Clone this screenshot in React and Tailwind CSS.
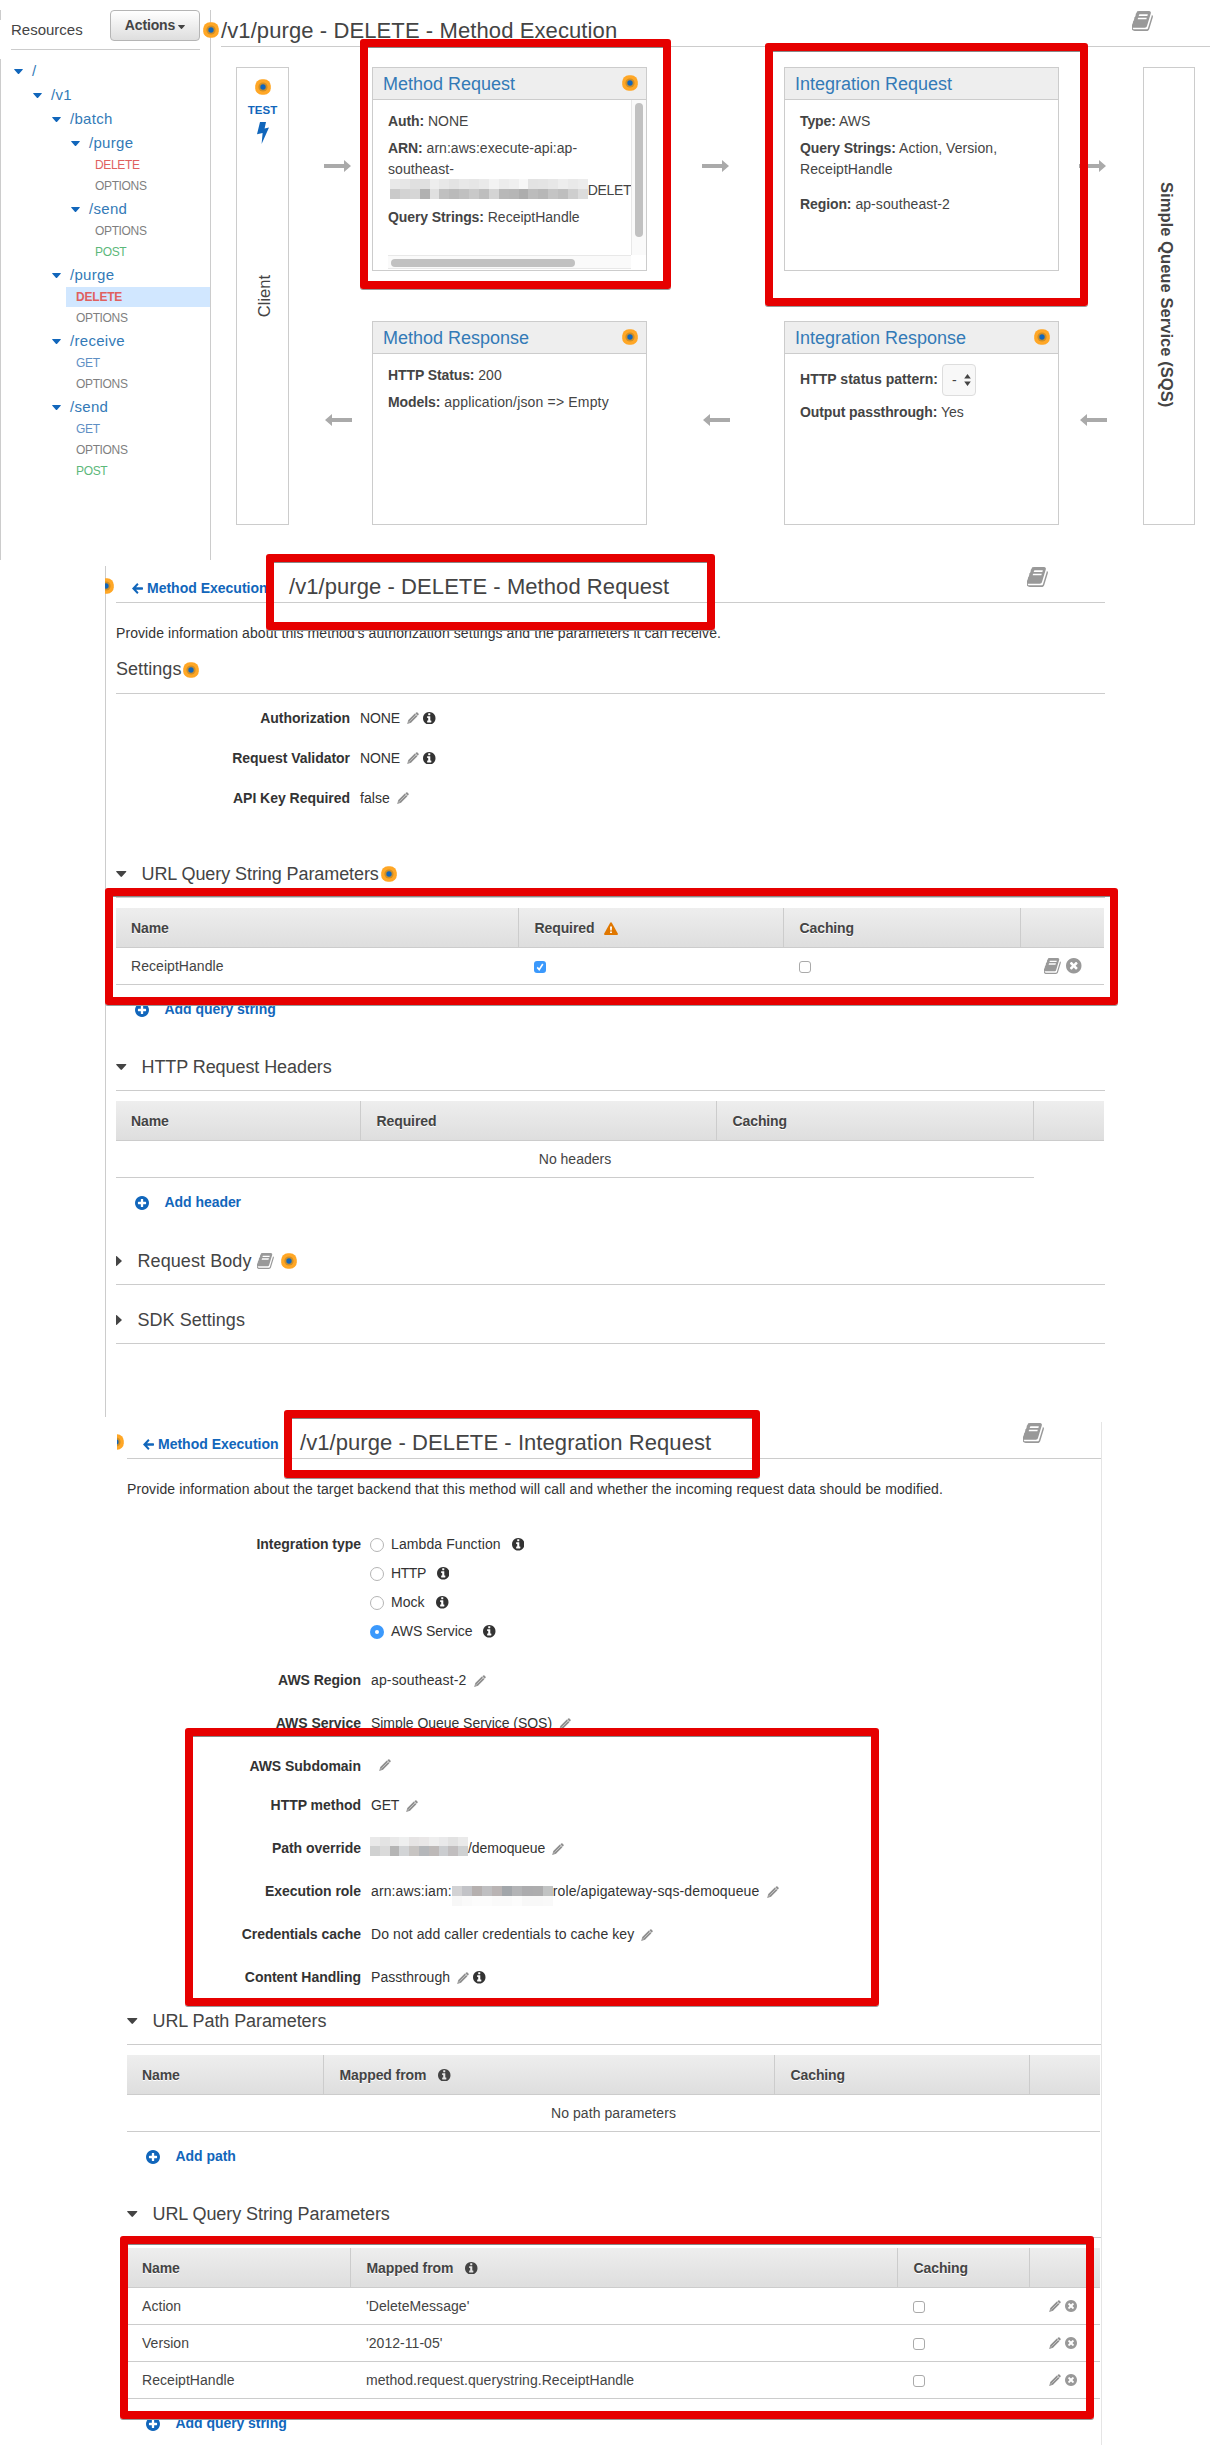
import React from "react";

const CIRCLE =
  "M1664 896q0 209-103 385.5t-279.5 279.5-385.5 103-385.5-103-279.5-279.5-103-385.5 103-385.5 279.5-279.5 385.5-103 385.5 103 279.5 279.5 103 385.5z";

const Glyph = ({ d, className }) => (
  <svg viewBox="128 128 1536 1536" className={`shrink-0 fill-current ${className}`} fillRule="evenodd">
    <path d={d} />
  </svg>
);

const Info = ({ className = "" }) => (
  <Glyph
    className={`size-[12.5px] ${className}`}
    d={
      "M1152 1376v-160q0-14-9-23t-23-9h-96v-512q0-14-9-23t-23-9h-320q-14 0-23 9t-9 23v160q0 14 9 23t23 9h96v320h-96q-14 0-23 9t-9 23v160q0 14 9 23t23 9h448q14 0 23-9t9-23zM1024 480v-160q0-14-9-23t-23-9h-192q-14 0-23 9t-9 23v160q0 14 9 23t23 9h192q14 0 23-9t9-23z" +
      CIRCLE
    }
  />
);

const Plus = () => (
  <Glyph
    className="size-[14px] text-[#1166bb]"
    d={
      "M1344 960v-128q0-26-19-45t-45-19h-256v-256q0-26-19-45t-45-19h-128q-26 0-45 19t-19 45v256h-256q-26 0-45 19t-19 45v128q0 26 19 45t45 19h256v256q0 26 19 45t45 19h128q26 0 45-19t19-45v-256h256q26 0 45-19t19-45z" +
      CIRCLE
    }
  />
);

const Times = ({ className }) => (
  <Glyph
    className={`text-[#999] ${className}`}
    d={
      "M1277 1122q0-26-19-45l-181-181 181-181q19-19 19-45 0-27-19-46l-90-90q-19-19-46-19-26 0-45 19l-181 181-181-181q-19-19-45-19-27 0-46 19l-90 90q-19 19-19 46 0 26 19 45l181 181-181 181q-19 19-19 45 0 27 19 46l90 90q19 19 46 19 26 0 45-19l181-181 181 181q19 19 45 19 27 0 46-19l90-90q19-19 19-46z" +
      CIRCLE
    }
  />
);

const Book = ({ className }) => (
  <svg viewBox="50 128 1620 1536" className={`shrink-0 fill-[#999] ${className}`}>
    <path d="M1639 478q40 57 18 129l-275 906q-19 64-76.5 107.5t-122.5 43.5h-923q-77 0-148.5-53.5t-99.5-131.5q-24-67-2-127 0-4 3-27t4-37q1-8-3-21.5t-3-19.5q2-11 8-21t16.5-23.5 16.5-23.5q23-38 45-91.5t30-91.5q3-10 .5-30t-.5-28q3-11 17-28t17-23q21-36 42-92t25-90q1-9-2.5-32t.5-28q4-13 22-30.5t22-22.5q19-26 42.5-84.5t27.5-96.5q1-8-3-25.5t-2-26.5q2-8 9-18t18-23 17-21q8-12 16.5-30.5t15-35 16-36 19.5-32 26.5-23.5 36-11.5 47.5 5.5l-1 3q38-9 51-9h761q74 0 114 56t18 130l-274 906q-36 119-71.5 153.5t-128.5 34.5h-869q-27 0-38 15-11 16-1 43 24 70 144 70h923q29 0 56-15.5t35-41.5l300-987q7-22 5-57 38 15 59 43zm-1064 2q-4 13 2 22.5t20 9.5h608q13 0 25.5-9.5t16.5-22.5l21-64q4-13-2-22.5t-20-9.5h-608q-13 0-25.5 9.5t-16.5 22.5zm-83 256q-4 13 2 22.5t20 9.5h608q13 0 25.5-9.5t16.5-22.5l21-64q4-13-2-22.5t-20-9.5h-608q-13 0-25.5 9.5t-16.5 22.5z" />
  </svg>
);

const Pencil = ({ className = "" }) => (
  <svg viewBox="0 0 12 12" className={`size-3 shrink-0 ${className}`}>
    <path d="M8.9 0.7 Q9.7 -0.1 10.5 0.6 L11.4 1.5 Q12.1 2.3 11.3 3.1 L10.7 3.7 L8.3 1.3 Z" fill="#8f8f8f" />
    <path d="M7.8 1.6 L10.4 4.2 L4 10.7 L0.2 11.9 L1.3 8.1 Z" fill="#8f8f8f" />
    <path d="M3.2 8.8 L9 3" stroke="#ddd" strokeWidth="0.7" />
    <path d="M1.9 9.2 L2.8 10.1 L1.6 10.5 Z" fill="#fff" />
  </svg>
);

const Warning = () => (
  <svg viewBox="0 0 14 13" className="h-[13px] w-[14px] shrink-0">
    <path d="M7 0.3 Q7.5 0.3 7.8 0.8 L13.8 11.6 Q14.2 13 13 13 H1 Q-0.2 13 0.2 11.6 L6.2 0.8 Q6.5 0.3 7 0.3 Z" fill="#e07700" />
    <path d="M6 4.5 H8 L7.7 8.4 H6.3 Z M6.1 9.4 H7.9 V11.1 H6.1 Z" fill="#fff" />
  </svg>
);

const Dot = ({ className = "" }) => (
  <svg viewBox="0 0 16 16" className={`size-4 shrink-0 ${className}`}>
    <rect x="0.2" y="0.2" width="15.6" height="15.6" rx="6.6" fill="#ffa726" />
    <circle cx="8" cy="8" r="4.6" fill="#cf8e26" />
    <circle cx="8" cy="8" r="2.7" fill="#1166bb" />
  </svg>
);

const CaretDown = ({ className }) => (
  <svg viewBox="0 0 10 6" preserveAspectRatio="none" className={`shrink-0 fill-current ${className}`}>
    <path d="M0.6 0 H9.4 Q10.2 0.3 9.6 1 L5.7 5.6 Q5 6.3 4.3 5.6 L0.4 1 Q-0.2 0.3 0.6 0 Z" />
  </svg>
);

const CaretRight = () => (
  <svg viewBox="0 0 6 10" className="h-[10px] w-[6px] shrink-0 fill-[#444]">
    <path d="M0 0.2 L0.6 0 L6 5 L0.6 10 L0 9.8 Z" />
  </svg>
);

const Arrow = ({ left, className = "" }) => (
  <svg viewBox="0 0 27 12" className={`h-3 w-[27px] shrink-0 fill-[#aaa] ${left ? "rotate-180" : ""} ${className}`}>
    <path d="M0 4 H20 V0 L27 6 L20 12 V8 H0 Z" />
  </svg>
);

const BackArrow = () => (
  <svg viewBox="0 0 11 11" className="size-[11px] shrink-0 fill-[#1166bb]">
    <path d="M6.6 1.4 L5.2 0.1 L0 5.5 L5.2 10.9 L6.6 9.6 L4.1 6.7 H10.4 Q11 6.6 11 6 V5 Q11 4.4 10.4 4.3 H4.1 Z" />
  </svg>
);

const Folder = ({ pad, children }) => (
  <div className={`flex h-6 items-center gap-[9px] text-[15px] tracking-[0.3px] text-[#337ab7] ${pad}`}>
    <CaretDown className="h-[5px] w-[9px] text-[#1166bb]" />
    {children}
  </div>
);

const Verb = ({ pad, color, active, children }) => (
  <div className={`h-[21px] ${active ? "pl-[65px]" : pad}`}>
    <div
      className={`h-5 text-[12px] leading-5 ${color} ${
        active ? "bg-[#d1e7ff] pl-[10px] font-bold tracking-[-0.2px]" : "tracking-[-0.35px]"
      }`}
    >
      {children}
    </div>
  </div>
);

const TREE = [
  ["f", "pl-[13px]", "/"],
  ["f", "pl-[32px]", "/v1"],
  ["f", "pl-[51px]", "/batch"],
  ["f", "pl-[70px]", "/purge"],
  ["v", "pl-[94px]", "DELETE"],
  ["v", "pl-[94px]", "OPTIONS"],
  ["f", "pl-[70px]", "/send"],
  ["v", "pl-[94px]", "OPTIONS"],
  ["v", "pl-[94px]", "POST"],
  ["f", "pl-[51px]", "/purge"],
  ["v", "pl-[75px]", "DELETE", true],
  ["v", "pl-[75px]", "OPTIONS"],
  ["f", "pl-[51px]", "/receive"],
  ["v", "pl-[75px]", "GET"],
  ["v", "pl-[75px]", "OPTIONS"],
  ["f", "pl-[51px]", "/send"],
  ["v", "pl-[75px]", "GET"],
  ["v", "pl-[75px]", "OPTIONS"],
  ["v", "pl-[75px]", "POST"],
];

const VERB_COLORS = {
  DELETE: "text-[#e0605e]",
  OPTIONS: "text-[#7f7f7f]",
  POST: "text-[#5cb87a]",
  GET: "text-[#5f8fc4]",
};

const Card = ({ title, dot, children }) => (
  <div className="h-[204px] border border-[#ccc]">
    <div className="flex h-8 items-center justify-between border-b border-[#ccc] bg-[#eee] pr-2 pl-[10px] text-[18px] text-[#337ab7]">
      <span className="pt-px">{title}</span>
      {dot && <Dot className="-mt-0.5" />}
    </div>
    {children}
  </div>
);

const Pair = ({ k, children, className = "" }) => (
  <p className={`leading-[21px] ${className}`}>
    <b className="tracking-[-0.1px]">{k}</b> {children}
  </p>
);

const Arrows = ({ width, pad }) => (
  <div className={`flex flex-col pt-[93px] ${width} ${pad}`}>
    <Arrow />
    <Arrow left className="mt-[242px] ml-px" />
  </div>
);

const Mosaic = ({ rows, cell }) => (
  <span className="flex shrink-0 flex-col">
    {rows.map((row, i) => (
      <span key={i} className="flex">
        {row.map((c, j) => (
          <span key={j} className={`${cell} ${c}`} />
        ))}
      </span>
    ))}
  </span>
);

const ARN_MASK = [
  [
    "bg-[#e9e9e9]", "bg-[#e6e6e6]", "bg-[#e0e0e0]", "bg-[#e0e0e0]", "bg-[#eee]", "bg-[#e8e8e8]", "bg-[#e3e3e3]",
    "bg-[#e8e8e8]", "bg-[#e6e6e6]", "bg-[#eaeaea]", "bg-[#f3f3f3]", "bg-[#ececec]", "bg-[#efefef]", "bg-[#f7f7f7]",
    "bg-[#e3e3e3]", "bg-[#e4e4e4]", "bg-[#e7e7e7]", "bg-[#ededed]", "bg-[#e9e9e9]", "bg-[#ececec]",
  ],
  [
    "bg-[#cacaca]", "bg-[#d3d3d3]", "bg-[#d6d6d6]", "bg-[#b1b1b1]", "bg-[#e0e0e0]", "bg-[#c0c0c0]", "bg-[#bababa]",
    "bg-[#c0c0c0]", "bg-[#c9c9c9]", "bg-[#bebebe]", "bg-[#d4d4d4]", "bg-[#b8b8b8]", "bg-[#b6b6b6]", "bg-[#adadad]",
    "bg-[#bcbcbc]", "bg-[#b7b7b7]", "bg-[#c4c4c4]", "bg-[#bebebe]", "bg-[#cecece]", "bg-[#dcdcdc]",
  ],
];

const PATH_MASK = [
  [
    "bg-[#e9e9e9]", "bg-[#e3e3e3]", "bg-[#e9e9e9]", "bg-[#eeefef]", "bg-[#e6e4e4]", "bg-[#e9e7e7]", "bg-[#eee]",
    "bg-[#e9e9ea]", "bg-[#e2e2e2]", "bg-[#eaeaea]",
  ],
  [
    "bg-[#d0d1d1]", "bg-[#dadada]", "bg-[#b5b5b5]", "bg-[#d2d4d6]", "bg-[#c7c4c2]", "bg-[#b5b7ba]", "bg-[#bdb9b8]",
    "bg-[#cbcdd0]", "bg-[#c1bebf]", "bg-[#cfd1d2]",
  ],
];

const ROLE_MASK = [
  [
    "bg-[#d2d2d4]", "bg-[#c2c3c7]", "bg-[#b5b0af]", "bg-[#bfbfc1]", "bg-[#b9b4b4]", "bg-[#a2a6aa]", "bg-[#b3b4b6]",
    "bg-[#acacae]", "bg-[#adadae]", "bg-[#c1c3c3]",
  ],
  [
    "bg-[#f7f7f7]", "bg-[#fafafa]", "bg-[#fcfcfc]", "bg-[#fcfcfc]", "bg-[#fafafa]", "bg-[#fafafa]", "bg-[#fcfcfc]",
    "bg-[#f8f8f8]", "bg-[#f8f8f8]", "bg-[#f9f9f9]",
  ],
];

const Callout = ({ className }) => (
  <div
    className={`pointer-events-none absolute rounded-[3px] border-8 border-[#e60000] shadow-[0_1px_0_#999,inset_0_1px_0_#888] ${className}`}
  />
);

const PanelHeader = ({ title }) => (
  <div className="flex h-[37px] border-b border-[#ccc] pl-4">
    <div className="flex w-[157px] items-center gap-1 pt-[9px] font-bold whitespace-nowrap text-[#1166bb]">
      <BackArrow />
      Method Execution
    </div>
    <h1 className="flex-1 text-[22px] leading-[41px] tracking-[0.07px] whitespace-nowrap text-[#444]">{title}</h1>
    <Book className="mt-px mr-[57px] h-[20px] w-[21px]" />
  </div>
);

const Field = ({ label, className = "h-[43px]", gap = "ml-[7px]", track = "tracking-[0.08px]", info, children }) => (
  <div className={`flex items-center text-[#333] ${className}`}>
    <b className="w-[234px] text-right tracking-[-0.03px]">{label}</b>
    <span className={`ml-[10px] flex items-center whitespace-nowrap ${track}`}>{children}</span>
    <Pencil className={gap} />
    {info && <Info className="ml-1" />}
  </div>
);

const Heading = ({ open = true, className = "", children }) => (
  <h2 className={`flex h-12 items-center border-b border-[#ccc] pt-px text-[18px] tracking-[-0.08px] text-[#444] ${className}`}>
    {open ? (
      <CaretDown className="mr-[15px] h-[6px] w-[10.5px]" />
    ) : (
      <span className="mr-[15.5px] flex">
        <CaretRight />
      </span>
    )}
    {children}
  </h2>
);

const Head = ({ cols, labels }) => (
  <div
    className={`mt-[10px] grid h-10 border-b border-[#ccc] bg-linear-to-b from-[#eee] to-[#dedede] font-bold tracking-[-0.1px] text-[#444] [text-shadow:0_1px_0_#fff] ${cols}`}
  >
    {labels.map((l, i) => (
      <div key={i} className={`flex items-center pt-px ${i ? "border-l border-[#ccc] pl-[15.5px]" : "pl-[15px]"}`}>
        {l}
      </div>
    ))}
  </div>
);

const Row = ({ cols, cells }) => (
  <div className={`grid h-[37px] border-b border-[#ccc] text-[#444] ${cols}`}>
    {cells.map((c, i) => (
      <div key={i} className={`flex items-center tracking-[0.05px] ${i ? "pl-4" : "pl-[15px]"}`}>
        {c}
      </div>
    ))}
  </div>
);

const Empty = ({ width, children }) => (
  <div className={`h-[37px] border-b border-[#ccc] text-center leading-[36px] text-[#444] ${width}`}>{children}</div>
);

const Add = ({ children }) => (
  <div className="flex h-[49px] items-center pl-[19px] font-bold tracking-[-0.05px] text-[#1166bb]">
    <Plus />
    <span className="ml-[15.5px]">{children}</span>
  </div>
);

const Check = ({ on }) =>
  on ? (
    <span className="mt-0.5 flex size-3 items-center justify-center rounded-[3px] bg-[#3b99fc]">
      <svg viewBox="0 0 12 12" className="size-3">
        <path d="M3.2 6.4 L5.2 8.6 L8.8 3" fill="none" stroke="#fff" strokeWidth="1.6" />
      </svg>
    </span>
  ) : (
    <span className="mt-0.5 size-3 rounded-[3px] border border-[#aaa] bg-white" />
  );

const Radio = ({ on }) =>
  on ? (
    <span className="flex size-[14px] items-center justify-center rounded-full bg-[#3b99fc]">
      <span className="size-1 rounded-full bg-white" />
    </span>
  ) : (
    <span className="size-[14px] rounded-full border border-[#b5b5b5] bg-white" />
  );

const Mapped = (
  <>
    Mapped from <Info className="ml-3" />
  </>
);

const QS1 = "w-[988px] grid-cols-[402px_265px_237px_84px]";
const HD = "w-[988px] grid-cols-[244px_356px_317px_71px]";
const PP = "w-[973px] grid-cols-[196px_451px_255px_71px]";
const QS2 = "w-[973px] grid-cols-[223px_547px_132px_71px]";

function Sidebar() {
  return (
    <aside className="flex w-[211px] pt-[10px]">
      <div className="flex w-px flex-col">
        <div className="h-[10px] bg-[#ccc]" />
        <div className="mt-[39px] flex-1 bg-[#ccc]" />
      </div>
      <div className="flex-1 border-r border-[#ccc]">
        <div className="ml-[10px] flex h-10 w-[189px] justify-between border-b border-[#ccc]">
          <span className="text-[15px] leading-[39px] text-[#444]">Resources</span>
          <button className="flex h-[31px] w-[90px] items-center justify-center gap-[3px] rounded-[4px] border border-[#b5b5b5] bg-linear-to-b from-white to-[#dedede] text-[14px] font-bold tracking-[-0.15px] text-[#444]">
            Actions
            <CaretDown className="mt-[2px] h-1 w-[7px]" />
          </button>
        </div>
        <div className="mt-[9px]">
          {TREE.map(([kind, pad, name, active], i) =>
            kind === "f" ? (
              <Folder key={i} pad={pad}>
                {name}
              </Folder>
            ) : (
              <Verb key={i} pad={pad} color={VERB_COLORS[name]} active={active}>
                {name}
              </Verb>
            )
          )}
        </div>
      </div>
    </aside>
  );
}

function Execution() {
  return (
    <section className="flex h-[560px]">
      <Sidebar />
      <main className="relative ml-[10px] w-[989px] pt-[10px]">
        <Dot className="absolute top-[21.5px] -left-[18.5px]" />
        <div className="flex h-[37px] justify-between border-b border-[#ccc]">
          <h1 className="text-[22px] leading-[41px] tracking-[0.1px] text-[#444]">/v1/purge - DELETE - Method Execution</h1>
          <Book className="mt-px mr-[57px] h-[20px] w-[21px]" />
        </div>
        <div className="mt-5 ml-[15px] flex h-[458px]">
          <div className="flex w-[53px] flex-col items-center border border-[#ccc] pt-[11px]">
            <Dot />
            <b className="mt-2 text-[11.5px] leading-[14px] text-[#1166bb]">TEST</b>
            <svg viewBox="0 0 12 22" className="mt-[5px] h-[22px] w-3 fill-[#1166bb]">
              <path d="M3 0 H9 L7.6 6.6 L12 5.4 L4.6 22 L5.6 11 L0 12.2 Z" />
            </svg>
            <span className="mt-[131px] ml-0.5 rotate-180 text-[16.5px] leading-5 text-[#444] [writing-mode:vertical-rl]">
              Client
            </span>
          </div>
          <Arrows width="w-[83px]" pad="pl-[35px]" />
          <div className="flex w-[275px] flex-col gap-[50px]">
            <Card title="Method Request" dot>
              <div className="flex h-[155px]">
                <div className="w-[258px] pt-[11px] pl-[15px] whitespace-nowrap">
                  <Pair k="Auth:">NONE</Pair>
                  <Pair k="ARN:" className="mt-1.5 tracking-[0.05px]">
                    arn:aws:execute-api:ap-
                    <br />
                    southeast-
                  </Pair>
                  <div className="flex h-[21px] items-center pl-0.5">
                    <span className="-mt-1">
                      <Mosaic rows={ARN_MASK} cell="h-[10px] w-[9.9px]" />
                    </span>
                    <span className="tracking-[-0.35px]">DELET</span>
                  </div>
                  <Pair k="Query Strings:" className="mt-1.5">
                    ReceiptHandle
                  </Pair>
                </div>
                <div className="w-[15px] border-l border-[#e8e8e8] bg-[#fafafa] pt-[3px] pl-[3px]">
                  <div className="h-[134px] w-2 rounded-full bg-[#c1c1c1]" />
                </div>
              </div>
              <div className="ml-[15px] h-[14px] w-[243px] border-y border-[#e8e8e8] bg-[#fafafa] pt-[3px] pl-[3px]">
                <div className="h-2 w-[184px] rounded-full bg-[#c1c1c1]" />
              </div>
            </Card>
            <Card title="Method Response" dot>
              <div className="pt-[11px] pl-[15px]">
                <Pair k="HTTP Status:">200</Pair>
                <Pair k="Models:" className="mt-1.5 tracking-[0.17px]">
                  application/json =&gt; Empty
                </Pair>
              </div>
            </Card>
          </div>
          <Arrows width="w-[137px]" pad="pl-[55px]" />
          <div className="flex w-[275px] flex-col gap-[50px]">
            <Card title="Integration Request">
              <div className="pt-[11px] pl-[15px]">
                <Pair k="Type:">AWS</Pair>
                <Pair k="Query Strings:" className="mt-1.5 tracking-[0.05px]">
                  Action, Version,
                  <br />
                  ReceiptHandle
                </Pair>
                <Pair k="Region:" className="mt-[14px] tracking-[0.08px]">
                  ap-southeast-2
                </Pair>
              </div>
            </Card>
            <Card title="Integration Response" dot>
              <div className="pt-[10px] pl-[15px]">
                <div className="flex h-8 items-center">
                  <b className="-mt-0.5 w-[142px] tracking-[0.03px]">HTTP status pattern:</b>
                  <span className="flex h-8 w-[34px] items-center justify-between rounded-[4px] border border-[#ddd] bg-[#f8f8f8] pr-1 pl-[9px]">
                    -
                    <svg viewBox="0 0 7 12" className="h-3 w-[7px] fill-[#444]">
                      <path d="M3.5 0 L6.8 4.6 H0.2 Z M3.5 12 L6.8 7.4 H0.2 Z" />
                    </svg>
                  </span>
                </div>
                <Pair k="Output passthrough:" className="mt-[6px]">
                  Yes
                </Pair>
              </div>
            </Card>
          </div>
          <Arrows width="w-[84px]" pad="pl-5" />
          <div className="flex w-[52px] border border-[#ccc] pt-[114px] pl-[13px]">
            <b className="text-[16.5px] leading-5 tracking-[0.06px] whitespace-nowrap text-[#444] [writing-mode:vertical-rl]">
              Simple Queue Service (SQS)
            </b>
          </div>
        </div>
      </main>
    </section>
  );
}

function MethodRequest() {
  return (
    <section className="relative mt-[6px] ml-[105px] h-[851px] w-[1014px] border-l border-[#ccc] pl-[10px]">
      <div className="absolute top-3 -left-px w-[9px] overflow-hidden">
        <Dot className="-ml-[7px]" />
      </div>
      <div className="w-[989px]">
        <PanelHeader title="/v1/purge - DELETE - Method Request" />
        <p className="mt-5 leading-5 tracking-[0.08px] text-[#333]">
          Provide information about this method's authorization settings and the parameters it can receive.
        </p>
        <h2 className="mt-px flex h-[50px] items-center gap-0.5 border-b border-[#ccc] pt-0.5 text-[18px] tracking-[0.05px] text-[#444]">
          Settings
          <Dot />
        </h2>
        <div className="mt-1">
          <Field label="Authorization" className="h-10" track="tracking-[-0.1px]" info>
            NONE
          </Field>
          <Field label="Request Validator" className="h-10" track="tracking-[-0.1px]" info>
            NONE
          </Field>
          <Field label="API Key Required" className="h-10">
            false
          </Field>
        </div>
        <Heading className="mt-8">
          URL Query String Parameters
          <Dot className="ml-[2.5px]" />
        </Heading>
        <Head
          cols={QS1}
          labels={[
            "Name",
            <>
              Required
              <span className="ml-[10px]">
                <Warning />
              </span>
            </>,
            "Caching",
            "",
          ]}
        />
        <Row
          cols={QS1}
          cells={[
            "ReceiptHandle",
            <Check on />,
            <Check />,
            <span className="ml-2 flex items-center gap-[5px]">
              <Book className="h-[16px] w-[17px]" />
              <Times className="size-[15.5px]" />
            </span>,
          ]}
        />
        <Add>Add query string</Add>
        <Heading className="mt-[9px]">HTTP Request Headers</Heading>
        <Head cols={HD} labels={["Name", "Required", "Caching", ""]} />
        <Empty width="w-[918px]">No headers</Empty>
        <Add>Add header</Add>
        <Heading open={false} className="mt-[10px]">
          <span className="tracking-[0.08px]">Request Body</span>
          <Book className="-mt-px ml-[5px] h-4 w-[17px]" />
          <Dot className="ml-[7px]" />
        </Heading>
        <Heading open={false} className="mt-[11px]">
          <span className="tracking-[0.03px]">SDK Settings</span>
        </Heading>
      </div>
    </section>
  );
}

function IntegrationRequest() {
  const types = [
    ["Lambda Function", "ml-[11px]", "tracking-[0.1px]"],
    ["HTTP", "ml-[11px]", "tracking-[-0.4px]"],
    ["Mock", "ml-3", "tracking-[0px]"],
    ["AWS Service", "ml-[11px]", "tracking-[-0.05px]"],
  ];
  const params = [
    ["Action", "'DeleteMessage'"],
    ["Version", "'2012-11-05'"],
    ["ReceiptHandle", "method.request.querystring.ReceiptHandle"],
  ];
  return (
    <section className="relative mt-[5px] ml-[117px] h-[1023px] w-[985px] overflow-hidden border-r border-[#e5e5e5] pl-[10px]">
      <Dot className="absolute top-3 -left-[9px]" />
      <div className="w-[974px]">
        <PanelHeader title="/v1/purge - DELETE - Integration Request" />
        <p className="mt-5 leading-5 tracking-[0.105px] text-[#333]">
          Provide information about the target backend that this method will call and whether the incoming request data
          should be modified.
        </p>
        <div className="mt-[31px]">
          {types.map(([t, gap, track], i) => (
            <div key={t} className="flex h-[29px] items-center text-[#333]">
              <b className="w-[234px] text-right tracking-[-0.03px]">{i === 0 ? "Integration type" : ""}</b>
              <span className="mt-px ml-[9px] flex">
                <Radio on={i === 3} />
              </span>
              <span className={`ml-[7px] ${track}`}>{t}</span>
              <Info className={gap} />
            </div>
          ))}
        </div>
        <div className="mt-[13px]">
          <Field label="AWS Region" track="tracking-[0.15px]">
            ap-southeast-2
          </Field>
          <Field label="AWS Service" track="tracking-[-0.04px]">
            Simple Queue Service (SQS)
          </Field>
          <Field label="AWS Subdomain" gap="ml-2 -mt-1" />
          <Field label="HTTP method" className="-mt-1 h-[43px]" track="tracking-[-0.2px]">
            GET
          </Field>
          <Field label="Path override" track="tracking-[-0.05px]">
            <span className="-mt-[5px] -ml-px">
              <Mosaic rows={PATH_MASK} cell="h-[9.5px] w-[9.8px]" />
            </span>
            /demoqueue
          </Field>
          <Field label="Execution role" gap="ml-2" track="tracking-[0.12px]">
            arn:aws:iam:
            <span className="mt-2">
              <Mosaic rows={ROLE_MASK} cell="h-[10px] w-[10.1px]" />
            </span>
            role/apigateway-sqs-demoqueue
          </Field>
          <Field label="Credentials cache">Do not add caller credentials to cache key</Field>
          <Field label="Content Handling" track="tracking-[0.04px]" info>
            Passthrough
          </Field>
        </div>
        <Heading className="-mt-0.5">URL Path Parameters</Heading>
        <Head cols={PP} labels={["Name", Mapped, "Caching", ""]} />
        <Empty width="w-[973px]">
          <span className="tracking-[0.07px]">No path parameters</span>
        </Empty>
        <Add>Add path</Add>
        <Heading className="mt-[9px]">URL Query String Parameters</Heading>
        <Head cols={QS2} labels={["Name", Mapped, "Caching", ""]} />
        {params.map(([n, v]) => (
          <Row
            key={n}
            cols={QS2}
            cells={[
              n,
              v,
              <Check />,
              <span className="ml-1 flex items-center gap-1">
                <Pencil />
                <Times className="size-3" />
              </span>,
            ]}
          />
        ))}
        <Add>Add query string</Add>
      </div>
    </section>
  );
}

export default function App() {
  return (
    <div className="relative h-[2445px] w-[1219px] overflow-hidden bg-white font-['Liberation_Sans',Arial,sans-serif] text-[14px] text-[#444]">
      <Execution />
      <MethodRequest />
      <IntegrationRequest />
      <Callout className="top-[39px] left-[360px] h-[250px] w-[311px]" />
      <Callout className="top-[43px] left-[765px] h-[263px] w-[323px]" />
      <Callout className="top-[554px] left-[266px] h-[76px] w-[449px]" />
      <Callout className="top-[888px] left-[105px] h-[117px] w-[1013px]" />
      <Callout className="top-[1410px] left-[284px] h-[68px] w-[476px]" />
      <Callout className="top-[1728px] left-[185px] h-[278px] w-[694px]" />
      <Callout className="top-[2236px] left-[120px] h-[183px] w-[974px]" />
    </div>
  );
}
